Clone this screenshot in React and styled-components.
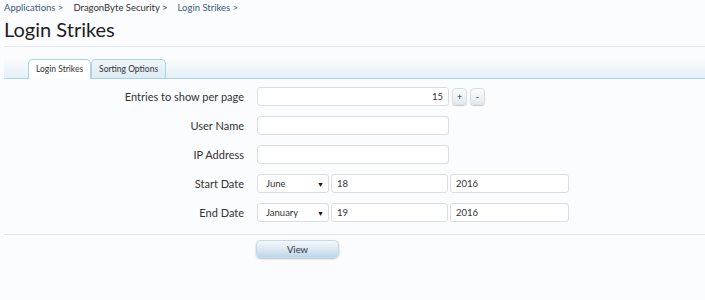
import React from 'react';
import styled, { createGlobalStyle } from 'styled-components';

const Global = createGlobalStyle`
  html, body { margin: 0; padding: 0; background: #fbfcfe; }
  body { font-family: Lato, "Liberation Sans", sans-serif; color: #222; }
  * { box-sizing: border-box; }
`;

const Page = styled.div`
  padding: 2px 0 0 4px;
  width: 705px;
  height: 300px;
  overflow: hidden;
`;

const Crumbs = styled.nav`
  display: flex;
  gap: 10px;
  font-size: 9.5px;
  line-height: 12px;
  height: 12px;
`;

const Crumb = styled.span`
  color: ${p => (p.$link ? '#3a5b78' : '#333')};
`;

const TitleBlock = styled.div`
  border-bottom: 1px solid #e4ebf0;
  padding-bottom: 4px;
`;

const Title = styled.h1`
  margin: 3px 0 0;
  font-size: 20px;
  font-weight: normal;
  line-height: 25px;
  color: #1e1e1e;
`;

const TabBar = styled.div`
  margin-top: 11px;
  height: 21px;
  padding-left: 24px;
  display: flex;
  align-items: flex-end;
  background: linear-gradient(to bottom, #fbfcfe 0%, #e4f0f7 100%);
  border-bottom: 1px solid #acd2e4;
`;

const Tab = styled.div`
  height: ${p => (p.$active ? '20px' : '19px')};
  margin-bottom: ${p => (p.$active ? '-1px' : '0')};
  padding: 0 7px;
  font-size: 8.5px;
  line-height: 18px;
  color: #333;
  border: 1px solid #acd2e4;
  border-bottom: none;
  border-radius: 5px 5px 0 0;
  background: ${p => (p.$active ? '#ffffff' : 'linear-gradient(to bottom, #eef6fa, #dcebf4)')};
`;

const Form = styled.div`
  padding-top: 8px;
  display: flex;
  flex-direction: column;
  gap: 10px;
`;

const Row = styled.div`
  display: grid;
  grid-template-columns: 240px auto;
  column-gap: 13px;
  align-items: center;
`;

const Label = styled.label`
  text-align: right;
  font-size: 11px;
  color: #333;
`;

const Controls = styled.div`
  display: flex;
  align-items: center;
  gap: 2px;
`;

const Field = styled.div`
  width: ${p => p.$w}px;
  height: 19px;
  border: 1px solid #d9dee3;
  border-radius: 3px;
  background: #fff;
  font-size: 9.5px;
  color: #333;
  padding: 0 5px;
  display: flex;
  align-items: center;
  justify-content: ${p => (p.$right ? 'flex-end' : 'flex-start')};
`;

const SelectBox = styled(Field)`
  justify-content: space-between;
  padding: 0 4px 0 8px;
`;

const Arrow = styled.span`
  font-size: 7px;
  color: #111;
`;

const Spin = styled.button`
  width: 15px;
  height: 17px;
  margin-left: 1px;
  padding: 0;
  border: 1px solid #d6dfe6;
  border-radius: 4px;
  background: linear-gradient(to bottom, #fafcfd, #e2e9ef);
  box-shadow: 0 1px 1px rgba(0, 0, 0, 0.2);
  font-family: inherit;
  font-size: 9px;
  line-height: 14px;
  color: #333;
`;

const Divider = styled.div`
  margin-top: 12px;
  border-top: 1px solid #d8e7f0;
`;

const ButtonRow = styled(Row)`
  margin-top: 5px;
  align-items: start;
`;

const ButtonCell = styled.div`
  display: flex;
`;

const ViewButton = styled.button`
  width: 83px;
  height: 18px;
  margin-left: -1px;
  padding: 0;
  border: 1px solid #c5d9e7;
  border-radius: 5px;
  background: linear-gradient(to bottom, #f4f8fb 0%, #dbe9f3 50%, #bdd7e9 100%);
  box-shadow: 0 1px 2px rgba(0, 0, 0, 0.25);
  font-family: inherit;
  font-size: 9.5px;
  color: #333;
`;

const Spacer = styled.span``;

const DateRow = ({ label, month, day, year }) => (
  <Row>
    <Label>{label}</Label>
    <Controls>
      <SelectBox $w={72}>
        <span>{month}</span>
        <Arrow>▼</Arrow>
      </SelectBox>
      <Field $w={117}>{day}</Field>
      <Field $w={119}>{year}</Field>
    </Controls>
  </Row>
);

export default function App() {
  return (
    <>
      <Global />
      <Page>
        <TitleBlock>
          <Crumbs>
            <Crumb $link>Applications &gt;</Crumb>
            <Crumb>DragonByte Security &gt;</Crumb>
            <Crumb $link>Login Strikes &gt;</Crumb>
          </Crumbs>
          <Title>Login Strikes</Title>
        </TitleBlock>
        <TabBar>
          <Tab $active>Login Strikes</Tab>
          <Tab>Sorting Options</Tab>
        </TabBar>
        <Form>
          <Row>
            <Label>Entries to show per page</Label>
            <Controls>
              <Field $w={192} $right>15</Field>
              <Spin>+</Spin>
              <Spin>-</Spin>
            </Controls>
          </Row>
          <Row>
            <Label>User Name</Label>
            <Controls>
              <Field $w={192} />
            </Controls>
          </Row>
          <Row>
            <Label>IP Address</Label>
            <Controls>
              <Field $w={192} />
            </Controls>
          </Row>
          <DateRow label="Start Date" month="June" day="18" year="2016" />
          <DateRow label="End Date" month="January" day="19" year="2016" />
        </Form>
        <Divider />
        <ButtonRow>
          <Spacer />
          <ButtonCell>
            <ViewButton>View</ViewButton>
          </ButtonCell>
        </ButtonRow>
      </Page>
    </>
  );
}
